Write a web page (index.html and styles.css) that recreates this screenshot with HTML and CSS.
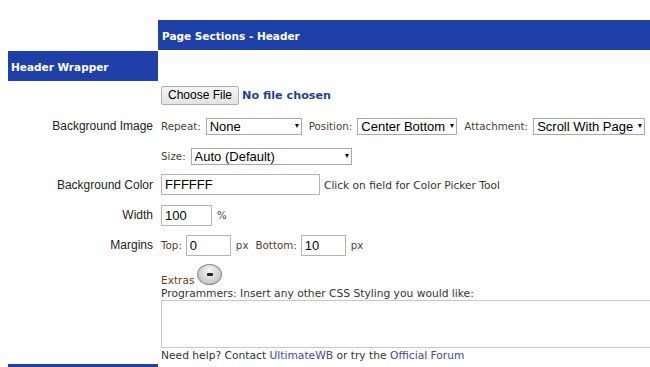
FILE: index.html
```html
<!DOCTYPE html>
<html lang="en">

<head>
    <meta charset="UTF-8">
    <title>Page Sections - Header</title>
    <link rel="stylesheet" href="styles.css">
</head>

<body>
    <div class="sheet">
        <div class="cell"></div>
        <div class="section-title">Page Sections - Header</div>

        <div class="group-title">Header Wrapper</div>
        <div class="cell"></div>

        <!-- file upload -->
        <div class="label row-file"></div>
        <div class="field row-file">
            <button class="file-btn" type="button">Choose File</button>
            <span class="file-name">No file chosen</span>
        </div>

        <!-- background image -->
        <div class="label row-image">Background Image</div>
        <div class="field row-image stacked">
            <div class="line">
                <span class="small">Repeat:</span>
                <span class="select w-repeat"><select><option>None</option></select></span>
                <span class="small gap">Position:</span>
                <span class="select w-position"><select><option>Center Bottom</option></select></span>
                <span class="small gap">Attachment:</span>
                <span class="select w-attach"><select><option>Scroll With Page</option></select></span>
            </div>
            <div class="line">
                <span class="small">Size:</span>
                <span class="select w-size"><select><option>Auto (Default)</option></select></span>
            </div>
        </div>

        <div class="label row-color">Background Color</div>
        <div class="field row-color">
            <input type="text" class="text w-color" value="FFFFFF">
            <span class="small hint">Click on field for Color Picker Tool</span>
        </div>

        <div class="label row-std">Width</div>
        <div class="field row-std">
            <input type="text" class="text w-width" value="100">
            <span class="small unit">%</span>
        </div>

        <div class="label row-std">Margins</div>
        <div class="field row-std">
            <span class="small">Top:</span>
            <input type="text" class="text w-margin" value="0">
            <span class="small unit">px</span>
            <span class="small gap">Bottom:</span>
            <input type="text" class="text w-margin" value="10">
            <span class="small unit">px</span>
        </div>

        <div class="cell"></div>
        <div class="extras">
            <div class="extras-head">
                <span class="extras-label">Extras</span>
                <span class="toggle"><span class="dash"></span></span>
            </div>
            <div class="note">Programmers: Insert any other CSS Styling you would like:</div>
            <textarea class="css-box"></textarea>
            <div class="note">Need help? Contact <a href="#">UltimateWB</a> or try the <a href="#">Official Forum</a></div>
        </div>

        <div class="group-title next"></div>
        <div class="cell"></div>
    </div>
</body>

</html>
```

FILE: styles.css
```css
body {
    margin: 0;
    padding: 20px 0 0 8px;
    font-family: "Liberation Sans", Arial, sans-serif;
    background: #fff;
    overflow: hidden;
}

.sheet {
    display: grid;
    grid-template-columns: 150px 1fr;
}

.section-title,
.group-title {
    background: #1f40a8;
    color: #fff;
    font-family: "DejaVu Sans", Verdana, sans-serif;
    font-weight: bold;
    font-size: 10.5px;
    height: 30px;
    display: flex;
    align-items: center;
}

.section-title {
    padding-left: 4px;
    padding-top: 1px;
    box-sizing: border-box;
}

.group-title {
    margin-top: 1px;
    padding-left: 3px;
    padding-top: 1px;
    box-sizing: border-box;
}

.group-title.next {
    margin-top: 0;
}

.label {
    font-size: 12px;
    color: #222;
    text-align: right;
    padding-right: 5px;
}

.field {
    padding-left: 3px;
    display: flex;
    align-items: center;
}

.row-file { height: 28px; }
.row-std { height: 30px; }

.row-color {
    height: 29px;
    box-sizing: border-box;
    padding-top: 3px;
}

.label.row-image {
    padding-top: 10px;
}

.label.row-std {
    display: flex;
    align-items: center;
    justify-content: flex-end;
}

.label.row-color {
    padding-top: 7px;
}

.field.row-color {
    align-items: flex-start;
}

.field.row-color .hint {
    margin-top: 5px;
}

.field.stacked {
    flex-direction: column;
    align-items: flex-start;
    padding-top: 2px;
}

.line {
    height: 30px;
    display: flex;
    align-items: center;
}

.file-btn {
    font-family: "Liberation Sans", Arial, sans-serif;
    font-size: 12px;
    height: 19px;
    padding: 0 6px;
    border: 1px solid #adadad;
    border-radius: 2px;
    background: linear-gradient(#f4f4f4, #e3e3e3);
    color: #000;
}

.file-name {
    font-family: "DejaVu Sans", Verdana, sans-serif;
    font-weight: bold;
    font-size: 11.2px;
    color: #1f3f9c;
    margin-left: 3px;
}

.small {
    font-family: "DejaVu Sans", Verdana, sans-serif;
    font-size: 10.3px;
    color: #4d4033;
}

.gap { margin-left: 7px; }
.unit { margin-left: 5px; }
.hint { margin-left: 4px; color: #333; font-size: 10.6px; }

.select {
    position: relative;
    display: inline-block;
    margin-left: 5px;
}

.select select {
    appearance: none;
    -webkit-appearance: none;
    width: 100%;
    height: 17px;
    border: 1px solid #a9a9a9;
    border-radius: 0;
    background: #fff;
    font-family: "Liberation Sans", Arial, sans-serif;
    font-size: 13px;
    color: #000;
    padding: 0 10px 0 3px;
    line-height: 15px;
}

.select::after {
    content: "";
    position: absolute;
    right: 3px;
    top: 7px;
    border-left: 2.5px solid transparent;
    border-right: 2.5px solid transparent;
    border-top: 4px solid #111;
}

.w-repeat { width: 96px; }
.w-position { width: 100px; }
.w-attach { width: 112px; }
.w-size { width: 161px; }

.text {
    box-sizing: border-box;
    height: 21px;
    border: 1px solid #b4b4b4;
    font-family: "Liberation Sans", Arial, sans-serif;
    font-size: 13px;
    color: #000;
    padding: 0 3px;
}

.w-color { width: 159px; }
.w-width { width: 51px; }
.w-margin { width: 45px; margin-left: 4px; }

.extras {
    box-sizing: border-box;
    padding: 5px 0 0 3px;
    display: flex;
    flex-direction: column;
    height: 104px;
}

.extras-head {
    display: flex;
    align-items: flex-end;
    height: 22px;
}

.extras-label {
    font-family: "DejaVu Sans", Verdana, sans-serif;
    font-size: 10.6px;
    color: #6b3d14;
    line-height: 13px;
}

.toggle {
    width: 23px;
    height: 19px;
    margin-left: 3px;
    margin-bottom: 2px;
    border: 1px solid #8c8c8c;
    border-radius: 50%;
    background: radial-gradient(ellipse at 50% 30%, #f8f8f8, #c9c9c9 70%, #a8a8a8);
    display: flex;
    align-items: center;
    justify-content: center;
}

.dash {
    width: 6px;
    height: 3px;
    background: #222;
    border-radius: 1px;
}

.note {
    font-family: "DejaVu Sans", Verdana, sans-serif;
    font-size: 10.7px;
    color: #333;
    line-height: 13px;
}

.note a {
    color: #4646a6;
    text-decoration: none;
}

.css-box {
    box-sizing: border-box;
    width: 100%;
    height: 48px;
    margin: 0 0 1px;
    border: 1px solid #c8c8c8;
    border-right: none;
    resize: none;
}
```
